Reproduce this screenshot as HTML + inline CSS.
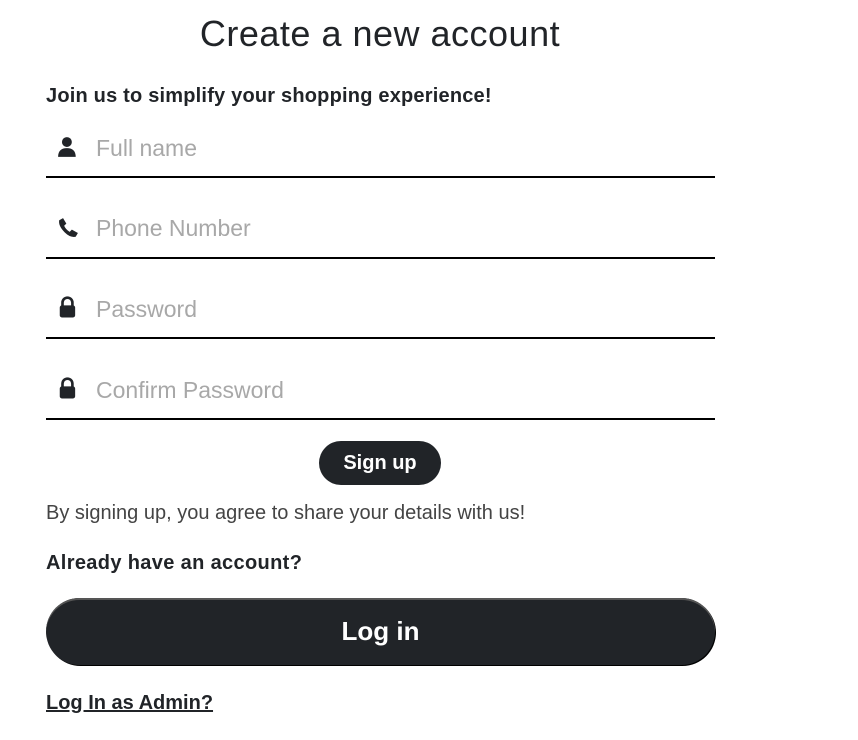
<!DOCTYPE html>
<html><head><meta charset="utf-8"><style>
body{margin:0;width:858px;height:740px;background:#fff;font-family:"Liberation Sans",sans-serif;color:#212428;position:relative;overflow:hidden}
.a{position:absolute;white-space:nowrap}
h1{position:absolute;margin:0;left:0;width:760px;text-align:center;top:12px;font-size:36px;font-weight:normal;line-height:44px;color:#212428;letter-spacing:0.5px}
.line{position:absolute;left:46px;width:669px;height:2px;background:#000}
.ph{position:absolute;left:96px;font-size:23px;color:#a8a8a8;line-height:28px}
.ic{position:absolute;left:57px;width:22px;height:22px}
.btn{position:absolute;background:#212428;color:#fff;font-weight:bold;text-align:center}
</style></head><body>
<h1>Create a new account</h1>
<div class="a" style="left:46px;top:84px;font-size:20px;font-weight:bold;line-height:24px;letter-spacing:0.2px">Join us to simplify your shopping experience!</div>

<svg class="ic" style="top:136px" viewBox="0 0 20 20"><circle cx="9" cy="5.5" r="4.5" fill="#212428"/><path d="M1 19 Q1 11 9 11 Q17 11 17 19Z" fill="#212428"/></svg>
<div class="ph" style="top:134px">Full name</div>
<div class="line" style="top:176px"></div>

<svg class="ic" style="top:217px" viewBox="0 0 20 20"><path d="M2 3 L5.5 1 L8.5 6 L6.5 8 Q8 11.5 11.5 13.5 L13.5 11.5 L19 14.5 L17 18 Q12 19 7 14 Q1 8 2 3Z" fill="#212428"/></svg>
<div class="ph" style="top:214px">Phone Number</div>
<div class="line" style="top:257px"></div>

<svg class="ic" style="top:296px" viewBox="0 0 20 20"><path d="M5 9 V6 A4.5 4.5 0 0 1 14 6 V9" stroke="#212428" stroke-width="2.4" fill="none"/><rect x="2.5" y="8.5" width="14" height="11" rx="2" fill="#212428"/></svg>
<div class="ph" style="top:295px">Password</div>
<div class="line" style="top:337px"></div>

<svg class="ic" style="top:377px" viewBox="0 0 20 20"><path d="M5 9 V6 A4.5 4.5 0 0 1 14 6 V9" stroke="#212428" stroke-width="2.4" fill="none"/><rect x="2.5" y="8.5" width="14" height="11" rx="2" fill="#212428"/></svg>
<div class="ph" style="top:376px">Confirm Password</div>
<div class="line" style="top:418px"></div>

<div class="btn" style="left:319px;top:441px;width:122px;height:44px;border-radius:22px;font-size:20px;line-height:44px">Sign up</div>
<div class="a" style="left:46px;top:500px;font-size:20px;color:#444;line-height:26px">By signing up, you agree to share your details with us!</div>
<div class="a" style="left:46px;top:551px;font-size:20px;font-weight:bold;line-height:24px;letter-spacing:0.35px">Already have an account?</div>
<div class="btn" style="left:46px;top:598px;width:669px;height:67px;border-radius:34px;font-size:26px;line-height:67px;box-shadow:inset 0 2px 0 #555,1px 1px 0 #000">Log in</div>
<div class="a" style="left:46px;top:691px;font-size:20px;font-weight:bold;text-decoration:underline;line-height:24px;letter-spacing:0">Log In as Admin?</div>
</body></html>
